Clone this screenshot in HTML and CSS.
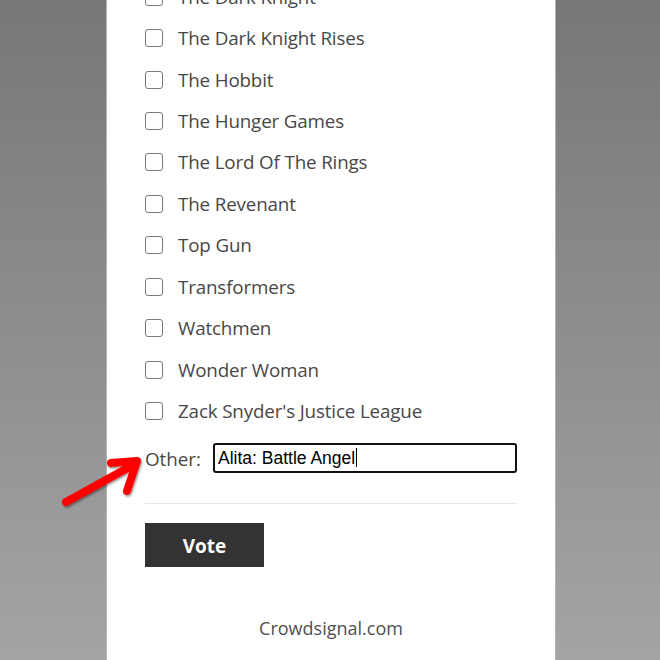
FILE: index.html
```html
<!DOCTYPE html>
<html>
<head>
<meta charset="utf-8">
<link rel="stylesheet" href="styles.css">
</head>
<body>
<div class="panel">
  <ul class="choices">
    <li class="choice"><span class="box"></span><span class="label">The Dark Knight</span></li>
    <li class="choice"><span class="box"></span><span class="label">The Dark Knight Rises</span></li>
    <li class="choice"><span class="box"></span><span class="label">The Hobbit</span></li>
    <li class="choice"><span class="box"></span><span class="label">The Hunger Games</span></li>
    <li class="choice"><span class="box"></span><span class="label">The Lord Of The Rings</span></li>
    <li class="choice"><span class="box"></span><span class="label">The Revenant</span></li>
    <li class="choice"><span class="box"></span><span class="label">Top Gun</span></li>
    <li class="choice"><span class="box"></span><span class="label">Transformers</span></li>
    <li class="choice"><span class="box"></span><span class="label">Watchmen</span></li>
    <li class="choice"><span class="box"></span><span class="label">Wonder Woman</span></li>
    <li class="choice"><span class="box"></span><span class="label">Zack Snyder's Justice League</span></li>
  </ul>
  <div class="other">
    <span class="other-label">Other:</span>
    <div class="other-input">Alita: Battle Angel<span class="caret"></span></div>
  </div>
  <hr class="divider">
  <div class="vote">Vote</div>
  <div class="footer">Crowdsignal.com</div>
</div>
<svg class="arrow" width="110" height="70" viewBox="0 0 110 70">
  <defs>
    <filter id="sh" x="-20%" y="-20%" width="140%" height="140%">
      <feDropShadow dx="1" dy="1.5" stdDeviation="1.2" flood-color="#000" flood-opacity="0.45"/>
    </filter>
  </defs>
  <g filter="url(#sh)" stroke="#ff0000" stroke-width="8" stroke-linecap="round" stroke-linejoin="round" fill="none">
    <path d="M11 55 L78 18"/>
    <path d="M56 16 L82 14 L72 44"/>
  </g>
</svg>
</body>
</html>
```
FILE: styles.css
```css
html, body {
  margin: 0;
  padding: 0;
  height: 660px;
  overflow: hidden;
}
body {
  background: linear-gradient(to bottom, #777777 0%, #a4a4a4 100%);
  position: relative;
  font-family: "Open Sans", "Noto Sans", sans-serif;
}
.panel {
  margin-left: 107px;
  width: 372px;
  height: 660px;
  background: #fff;
  padding: 0 38px;
  box-shadow: -1px 0 0 #b5b5b5, 1px 0 0 #b5b5b5;
}
.choices {
  list-style: none;
  margin: 0;
  padding: 0;
  position: relative;
  top: -24px;
  margin-bottom: -24px;
}
.choice {
  display: flex;
  align-items: center;
  height: 41.45px;
}
.box {
  width: 16px;
  height: 16px;
  border: 1.5px solid #7a7a7a;
  border-radius: 3px;
  flex: none;
  margin-right: 15px;
}
.label {
  font-size: 18.8px;
  color: #474747;
  letter-spacing: -0.15px;
}
.other {
  display: flex;
  align-items: center;
  margin-top: 11px;
}
.other-label {
  font-size: 18.8px;
  color: #474747;
  width: 68px;
  position: relative;
  top: 1px;
}
.other-input {
  flex: 1;
  height: 26px;
  border: 2px solid #111;
  border-radius: 3px;
  font-family: "Liberation Sans", Arial, sans-serif;
  font-size: 17.5px;
  color: #000;
  line-height: 26px;
  padding: 0 3px;
  display: flex;
  align-items: center;
}
.caret {
  display: inline-block;
  width: 1px;
  height: 19px;
  background: #000;
  margin-left: 1px;
}
.divider {
  border: 0;
  border-top: 1px solid #e6e6e6;
  margin: 30px 0 0;
}
.vote {
  margin-top: 19px;
  width: 119px;
  height: 44px;
  background: #333;
  color: #fff;
  font-weight: 700;
  font-size: 19px;
  display: flex;
  align-items: center;
  justify-content: center;
  padding-top: 3px;
  box-sizing: border-box;
}
.footer {
  margin-top: 49px;
  text-align: center;
  font-size: 18px;
  color: #4f4f4f;
}
.arrow {
  position: absolute;
  left: 55px;
  top: 447px;
}
```
